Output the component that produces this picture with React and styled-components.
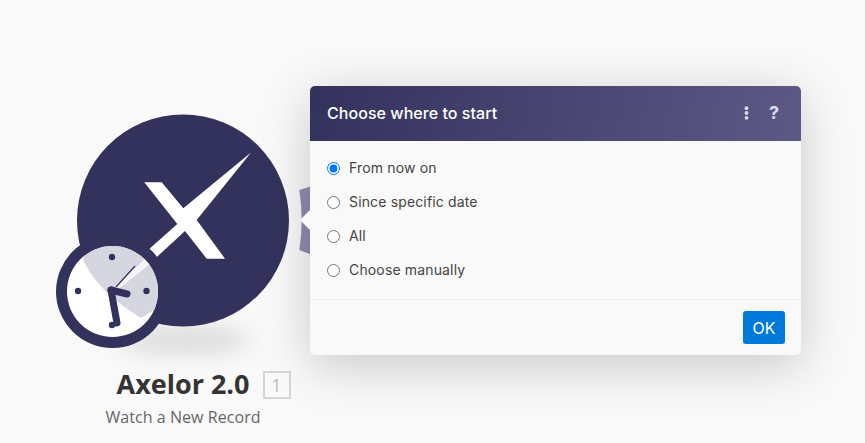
import React from "react";
import styled, { createGlobalStyle } from "styled-components";

const GlobalStyle = createGlobalStyle`
  html, body {
    margin: 0;
    padding: 0;
    height: 100%;
    background: #f9f9f9;
  }
`;

const Canvas = styled.div`
  position: relative;
  width: 865px;
  height: 443px;
  overflow: hidden;
  background: #f9f9f9;
`;

const Node = styled.div`
  position: absolute;
  left: 40px;
  top: 100px;
  width: 286px;
  display: flex;
  flex-direction: column;
`;

const NodeArt = styled.svg`
  display: block;
  width: 286px;
  height: 260px;
  overflow: visible;
`;

const NodeLabel = styled.div`
  width: 286px;
  margin-top: 6px;
  display: flex;
  flex-direction: column;
  align-items: center;
  font-family: "Open Sans", sans-serif;
`;

const NodeTitle = styled.div`
  position: relative;
  font-size: 27px;
  font-weight: 700;
  line-height: 36px;
  color: #333;
`;

const ModuleBadge = styled.span`
  position: absolute;
  left: calc(100% + 13px);
  top: 5px;
  width: 24px;
  height: 24px;
  border: 2px solid #d6d6d6;
  display: flex;
  align-items: center;
  justify-content: center;
  font-size: 18px;
  font-weight: 400;
  color: #bbb;
`;

const NodeSubtitle = styled.div`
  margin-top: 4px;
  font-size: 16px;
  line-height: 22px;
  letter-spacing: 0.06px;
  color: #666;
`;

const Dialog = styled.div`
  position: absolute;
  left: 310px;
  top: 86px;
  width: 491px;
  height: 269px;
  display: flex;
  flex-direction: column;
  background: #f9f9f9;
  border-radius: 5px;
  box-shadow: 0 10px 50px rgba(0, 0, 0, 0.2);
  font-family: "Inter", sans-serif;
`;

const DialogArrow = styled.span`
  position: absolute;
  left: -10px;
  top: 124px;
  width: 0;
  height: 0;
  border-style: solid;
  border-width: 10px 10px 10px 0;
  border-color: transparent #f9f9f9 transparent transparent;
`;

const DialogHeader = styled.div`
  height: 55px;
  box-sizing: border-box;
  padding: 0 22px 2px 17px;
  display: flex;
  align-items: center;
  justify-content: space-between;
  background: linear-gradient(100deg, #33325c 0%, #5c5a85 100%);
  border-radius: 5px 5px 0 0;
`;

const DialogTitle = styled.div`
  font-size: 16px;
  font-weight: 500;
  letter-spacing: 0.05px;
  color: #fff;
`;

const HeaderActions = styled.div`
  display: flex;
  align-items: center;
  gap: 20px;
  color: #dcdce6;
`;

const HelpMark = styled.span`
  font-size: 18px;
  font-weight: 700;
  line-height: 1;
`;

const DialogBody = styled.div`
  flex: 1;
  padding: 10px 17px 0;
  display: flex;
  flex-direction: column;
`;

const RadioRow = styled.label`
  height: 34px;
  display: flex;
  align-items: center;
  gap: 9px;
  font-size: 14px;
  letter-spacing: 0.15px;
  color: #444;
`;

const RadioText = styled.span`
  padding-bottom: 2px;
`;

const RadioInput = styled.input`
  width: 13px;
  height: 13px;
  margin: 0;
`;

const DialogFooter = styled.div`
  height: 56px;
  box-sizing: border-box;
  padding: 11px 16px 0 0;
  display: flex;
  justify-content: flex-end;
  border-top: 1px solid #eeeeee;
`;

const OkButton = styled.button`
  width: 42px;
  height: 33px;
  border: 0;
  border-radius: 3px;
  padding: 0;
  background: #0079da;
  color: #fff;
  font-family: inherit;
  font-size: 16px;
`;

const options = ["From now on", "Since specific date", "All", "Choose manually"];

function ModuleArt() {
  return (
    <NodeArt viewBox="40 100 286 260">
      <defs>
        <filter id="ground" x="-50%" y="-150%" width="200%" height="400%">
          <feGaussianBlur stdDeviation="12" />
        </filter>
        <clipPath id="clockFace">
          <circle cx="112.5" cy="291.5" r="45.5" />
        </clipPath>
      </defs>

      <ellipse cx="185" cy="340" rx="68" ry="12" fill="#000" opacity="0.14" filter="url(#ground)" />

      <path
        d="M299.3 190 L312 186 L312 255 L299.3 250 Q304 220 299.3 190 Z"
        fill="#8e8eae"
      />

      <circle cx="183" cy="220.5" r="106" fill="#33325c" />
      <path
        d="M144.3 182.3 L161.7 182.3 L183.3 208.3 L251 152.5 L196.7 220 L225 258.7 L206.7 258.7 L185 231 L146 267 L138 259 L177.3 224 Z"
        fill="#fff"
      />

      <circle cx="112.5" cy="291.5" r="56.5" fill="#33325c" />
      <circle cx="112.5" cy="291.5" r="45.5" fill="#fff" />
      <g clipPath="url(#clockFace)">
        <path d="M83 260 Q98 292 141 318 L170 300 L170 235 L90 235 Z" fill="#d6d6e0" />
        <path d="M115 287 L145 259 L150 264 L117 290 Z" fill="#fff" opacity="0.75" />
      </g>
      <circle cx="112" cy="257" r="3.2" fill="#33325c" />
      <circle cx="78" cy="291" r="3.2" fill="#33325c" />
      <circle cx="146.5" cy="291" r="3.2" fill="#33325c" />
      <circle cx="112" cy="325" r="3.2" fill="#33325c" />
      <path d="M116 287 L135 266" stroke="#33325c" strokeWidth="1.2" fill="none" />
      <path d="M111 290 L127 294" stroke="#33325c" strokeWidth="7" strokeLinecap="round" fill="none" />
      <path d="M111 290 L117 323" stroke="#33325c" strokeWidth="7" strokeLinecap="round" fill="none" />
    </NodeArt>
  );
}

export default function App() {
  return (
    <Canvas>
      <GlobalStyle />
      <Node>
        <ModuleArt />
        <NodeLabel>
          <NodeTitle>
            Axelor 2.0
            <ModuleBadge>1</ModuleBadge>
          </NodeTitle>
          <NodeSubtitle>Watch a New Record</NodeSubtitle>
        </NodeLabel>
      </Node>
      <Dialog>
        <DialogArrow />
        <DialogHeader>
          <DialogTitle>Choose where to start</DialogTitle>
          <HeaderActions>
            <svg width="5" height="14" viewBox="0 0 5 14">
              <circle cx="2.5" cy="2.2" r="1.9" fill="#dcdce6" />
              <circle cx="2.5" cy="7" r="1.9" fill="#dcdce6" />
              <circle cx="2.5" cy="11.8" r="1.9" fill="#dcdce6" />
            </svg>
            <HelpMark>?</HelpMark>
          </HeaderActions>
        </DialogHeader>
        <DialogBody>
          {options.map((option, index) => (
            <RadioRow key={option}>
              <RadioInput type="radio" name="start" defaultChecked={index === 0} />
              <RadioText>{option}</RadioText>
            </RadioRow>
          ))}
        </DialogBody>
        <DialogFooter>
          <OkButton>OK</OkButton>
        </DialogFooter>
      </Dialog>
    </Canvas>
  );
}
